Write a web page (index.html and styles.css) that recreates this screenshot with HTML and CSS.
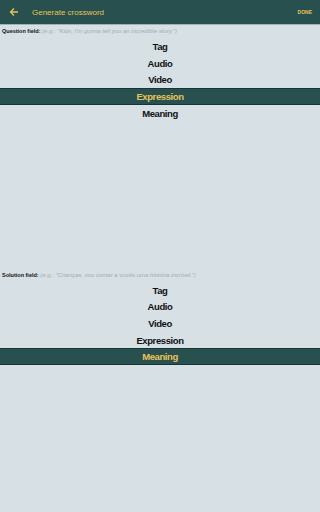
FILE: index.html
```html
<!DOCTYPE html>
<html>
<head>
    <title>Generate crossword</title>
    <link rel="stylesheet" href="styles.css">
</head>
<body>
    <div class="toolbar">
        <svg class="back" width="10" height="10" viewBox="0 0 10 10">
            <path d="M9 5H1.5M5 1.5L1.5 5L5 8.5" fill="none" stroke="#e8c35a" stroke-width="1.3"/>
        </svg>
        <span class="title">Generate crossword</span>
        <span class="done">DONE</span>
    </div>
    <div class="page">
        <div class="section">
            <div class="field-label"><b>Question field:</b> <i>(e.g.: "Kids, I'm gonna tell you an incredible story.")</i></div>
            <div class="option">Tag</div>
            <div class="option">Audio</div>
            <div class="option">Video</div>
            <div class="option selected">Expression</div>
            <div class="option">Meaning</div>
        </div>
        <div class="section">
            <div class="field-label"><b>Solution field:</b> <i>(e.g.: "Crianças, vou contar a vocês uma história incrível.")</i></div>
            <div class="option">Tag</div>
            <div class="option">Audio</div>
            <div class="option">Video</div>
            <div class="option">Expression</div>
            <div class="option selected">Meaning</div>
        </div>
    </div>
</body>
</html>
```
FILE: styles.css
```css
html, body {
    margin: 0;
    height: 100%;
}
body {
    font-family: 'Liberation Sans Narrow', 'Liberation Sans', sans-serif;
    background: #d6e0e5;
    color: #111;
    display: flex;
    flex-direction: column;
}
.toolbar {
    height: 24px;
    background: #27504f;
    border-bottom: 1px solid #9fb3b6;
    display: flex;
    align-items: center;
    padding: 0 8px 0 9px;
    flex-shrink: 0;
}
.back {
    display: block;
}
.title {
    color: #e8c35a;
    font-family: 'Liberation Sans', sans-serif;
    font-size: 8px;
    margin-left: 13px;
    flex: 1;
}
.done {
    color: #e8c35a;
    font-family: 'Liberation Sans', sans-serif;
    font-weight: bold;
    font-size: 5px;
}
.page {
    flex: 1;
    display: flex;
    flex-direction: column;
}
.section {
    flex: 1;
}
.field-label {
    height: 13px;
    line-height: 13px;
    padding-left: 2px;
    font-size: 5.5px;
    white-space: nowrap;
}
.field-label b {
    color: #111;
}
.field-label i {
    color: #a3acb2;
    font-size: 6px;
}
.option {
    height: 16.7px;
    line-height: 15.7px;
    padding-top: 1px;
    text-align: center;
    font-weight: bold;
    font-size: 9.5px;
    letter-spacing: -0.4px;
    box-sizing: border-box;
}
.option.selected {
    background: #27504f;
    color: #e8c35a;
    border-top: 1px solid #173535;
    border-bottom: 1px solid #173535;
    line-height: 13.7px;
}
```
